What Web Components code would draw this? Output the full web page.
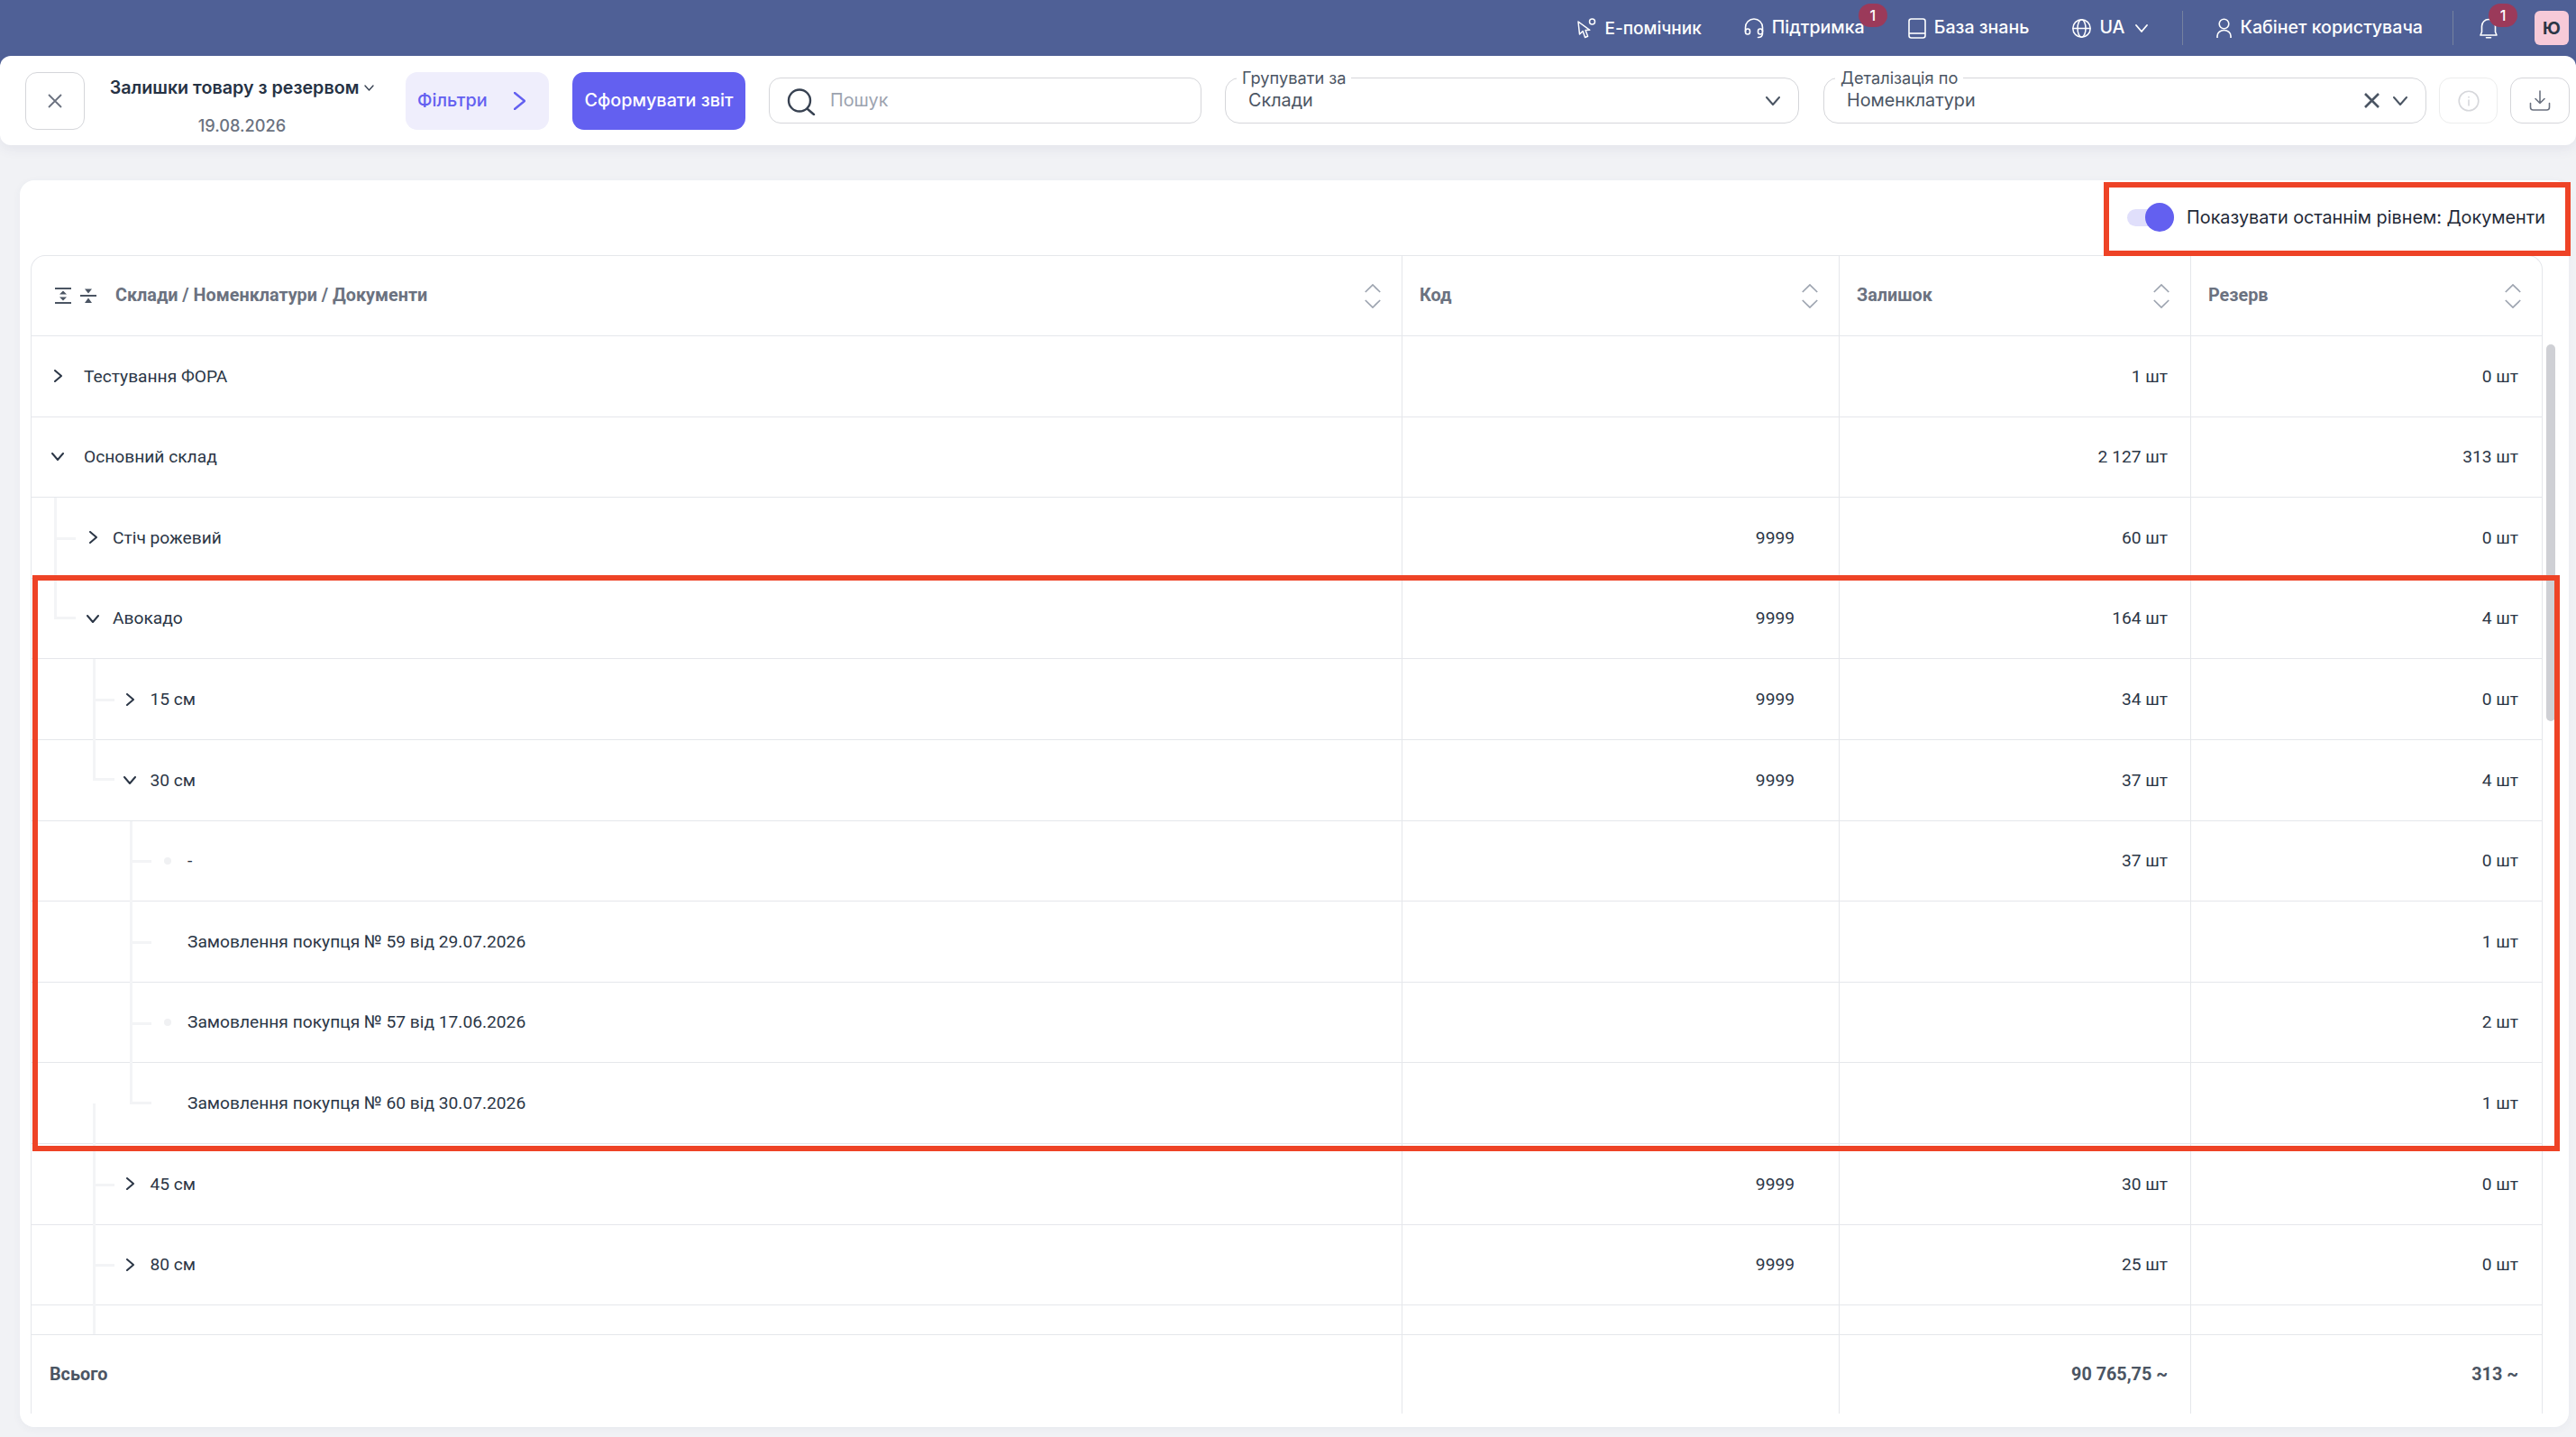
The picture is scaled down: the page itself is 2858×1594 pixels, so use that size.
<!DOCTYPE html>
<html lang="uk">
<head>
<meta charset="utf-8">
<title>Залишки товару з резервом</title>
<style>
html,body{margin:0;padding:0;height:1594px;overflow:hidden;background:#f1f2f5;font-family:Inter,"Noto Sans",sans-serif;color:#2b3646}
app-shell{display:block;position:relative;width:2858px;height:1594px;overflow:hidden}
</style>
</head>
<body>
<app-shell>
  <app-topbar>
    <top-link icon="cursor" style="margin-left:0;font-size:19px">Е-помічник</top-link>
    <top-link icon="headset" badge="1" style="margin-left:47px">Підтримка</top-link>
    <top-link icon="book" style="margin-left:48px">База знань</top-link>
    <top-link icon="globe" caret style="margin-left:48px">UA</top-link>
    <top-divider style="margin-left:38px"></top-divider>
    <top-link icon="user" style="margin-left:37px">Кабінет користувача</top-link>
    <top-divider style="margin-left:33px"></top-divider>
    <top-link icon="bell" badge="1" style="margin-left:29px"></top-link>
    <user-avatar style="margin-left:41px">Ю</user-avatar>
  </app-topbar>
  <app-toolbar>
    <square-button icon="close" style="width:66px;height:64px"></square-button>
    <report-title date="19.08.2026">Залишки товару з резервом</report-title>
    <filter-button>Фільтри</filter-button>
    <primary-button>Сформувати звіт</primary-button>
    <search-field placeholder="Пошук"></search-field>
    <float-select label="Групувати за" value="Склади" style="width:637px;margin-left:26px"></float-select>
    <float-select label="Деталізація по" value="Номенклатури" clearable style="width:669px;margin-left:27px"></float-select>
    <square-button icon="info" muted style="width:65px;height:51px;margin-left:14px"></square-button>
    <square-button icon="download" style="width:66px;height:51px;margin-left:14px"></square-button>
  </app-toolbar>
  <report-card>
    <toggle-switch slot="tools">Показувати останнім рівнем: Документи</toggle-switch>
    <report-table></report-table>
  </report-card>
  <note-box style="left:2334px;top:202px;width:518px;height:82px"></note-box>
  <note-box style="left:36px;top:638px;width:2804px;height:639px"></note-box>
</app-shell>

<script>
const ICONS = {
  cursor:`<svg width="21" height="23" viewBox="0 0 21 23" fill="none" stroke="#fff" stroke-width="1.5" stroke-linejoin="round"><path d="M1 4l1.5 14 3.6-3.4L8.6 21.5l3-1.3-2.6-6.6 4.8-.3z"/><circle cx="16.5" cy="4" r="3"/></svg>`,
  headset:`<svg width="22" height="23" viewBox="0 0 22 23" fill="none" stroke="#fff" stroke-width="1.6" stroke-linecap="round"><path d="M1.5 15V10.500a9.500 9.500 0 0 1 19 0V15"/><rect x="1.500" y="12" width="5" height="6" rx="2.400"/><rect x="15.500" y="12" width="5" height="6" rx="2.400"/><path d="M20.500 17c0 3.500-2 4.500-5 4.500"/></svg>`,
  book:`<svg width="20" height="23" viewBox="0 0 20 23" fill="none" stroke="#fff" stroke-width="1.600"><rect x="1" y="1" width="18" height="21" rx="2.500"/><path d="M1 17h18"/></svg>`,
  globe:`<svg width="21" height="21" viewBox="0 0 21 21" fill="none" stroke="#fff" stroke-width="1.500"><circle cx="10.500" cy="10.500" r="9.700"/><ellipse cx="10.500" cy="10.500" rx="4.500" ry="9.700"/><path d="M1 10.500h19"/></svg>`,
  user:`<svg width="17" height="23" viewBox="0 0 17 23" fill="none" stroke="#fff" stroke-width="1.600"><circle cx="8.500" cy="6.500" r="5.300"/><path d="M1 22v-2a7.500 6.500 0 0 1 15 0v2"/></svg>`,
  bell:`<svg width="20" height="23" viewBox="0 0 20 23" fill="none" stroke="#fff" stroke-width="1.600" stroke-linejoin="round"><path d="M10 1.500a7.500 7.500 0 0 0-7.500 7.500v6.500L1 19h18l-1.500-3.500V9A7.500 7.500 0 0 0 10 1.500z"/><path d="M7.500 21.800h5" stroke-linecap="round"/></svg>`,
  close:`<svg width="16" height="16" viewBox="0 0 16 16" fill="none" stroke="#6b7280" stroke-width="1.800"><path d="M1 1l14 14M15 1L1 15"/></svg>`,
  info:`<svg width="24" height="24" viewBox="0 0 24 24" fill="none" stroke="#d6d7db" stroke-width="1.600"><circle cx="12" cy="12" r="10.800"/><path d="M12 10.500v7M12 7v1.600"/></svg>`,
  download:`<svg width="24" height="23" viewBox="0 0 24 23" fill="none" stroke="#6b7280" stroke-width="1.600" stroke-linecap="round" stroke-linejoin="round"><path d="M12 1v13M7 9.500l5 5 5-5M1.500 14.500V19a3 3 0 0 0 3 3h15a3 3 0 0 0 3-3v-4.500"/></svg>`,
  search:`<svg width="33" height="30" viewBox="0 0 33 30" fill="none" stroke="#374151" stroke-width="2.400" stroke-linecap="round"><circle cx="15" cy="13.500" r="12"/><path d="M24 23l7 6"/></svg>`,
  expand:`<svg width="18" height="18" viewBox="0 0 18 18" fill="#4b5563"><rect x="0" y="0" width="18" height="2"/><rect x="0" y="16" width="18" height="2"/><path d="M9 3.500l4 4H5zM9 14.500l-4-4h8z"/></svg>`,
  collapse:`<svg width="18" height="18" viewBox="0 0 18 18" fill="#4b5563"><rect x="0" y="8" width="18" height="2"/><path d="M9 6.500L5 1.500h8zM9 11.500l4 5.500H5z"/></svg>`,
  sort:`<svg width="18" height="27" viewBox="0 0 18 27" fill="none" stroke="#9ca3af" stroke-width="1.700"><path d="M.8 9L9 1l8.200 8M.8 18L9 26l8.200-8"/></svg>`,
};
const chevron = (w,h,c,sw,dir='down') => dir==='down'
  ? `<svg width="${w}" height="${h}" viewBox="0 0 ${w} ${h}" fill="none" stroke="${c}" stroke-width="${sw}" stroke-linecap="round" stroke-linejoin="round"><path d="M1 1l${w/2-1} ${h-2}L${w-1} 1"/></svg>`
  : `<svg width="${w}" height="${h}" viewBox="0 0 ${w} ${h}" fill="none" stroke="${c}" stroke-width="${sw}" stroke-linecap="round" stroke-linejoin="round"><path d="M1 1l${w-2} ${h/2-1}L1 ${h-1}"/></svg>`;

class Base extends HTMLElement {
  constructor(){super();this.attachShadow({mode:'open'});}
  connectedCallback(){this.shadowRoot.innerHTML=this.render();}
}
const def=(n,f)=>customElements.define(n,class extends Base{render(){return f(this);}});

def('app-topbar',()=>`<style>:host{display:flex;align-items:center;justify-content:flex-end;height:62px;background:#4f6096;padding-right:8px;box-sizing:border-box;box-shadow:0 12px 0 #4f6096}</style><slot></slot>`);
def('top-link',e=>`<style>:host{display:flex;align-items:center;gap:9px;height:62px;position:relative;color:#fff;font:500 19.600px/1 Inter,sans-serif}
.b{position:absolute;top:4px;right:${e.textContent.trim()?'-25px':'-22px'};width:32px;height:26px;border-radius:13px;background:#9b3a5a;color:#fff;font:500 16px/26px Inter,sans-serif;text-align:center}
.c{display:flex;margin-left:3px}svg{display:block}</style>${ICONS[e.getAttribute('icon')]}<slot></slot>${e.hasAttribute('caret')?`<span class="c">${chevron(14,9,'#fff',1.8)}</span>`:''}${e.hasAttribute('badge')?`<span class="b">${e.getAttribute('badge')}</span>`:''}`);
def('top-divider',()=>`<style>:host{display:block;width:1px;height:38px;background:#75829f}</style>`);
def('user-avatar',()=>`<style>:host{display:flex;align-items:center;justify-content:center;width:38px;height:38px;border-radius:6px;background:#f7cad8;color:#2b3646;font:700 19px/1 Inter,sans-serif}</style><slot></slot>`);

def('app-toolbar',()=>`<style>:host{display:flex;align-items:center;height:99px;padding-left:28px;box-sizing:border-box;background:#fff;border-radius:12px;box-shadow:0 4px 14px rgba(60,70,110,.08);position:relative}</style><slot></slot>`);
def('square-button',e=>`<style>:host{display:flex;align-items:center;justify-content:center;box-sizing:border-box;flex:none;border:1.500px solid ${e.hasAttribute('muted')?'#eceded':'#d5d6da'};border-radius:13px;background:#fff}svg{display:block}</style>${ICONS[e.getAttribute('icon')]}`);
def('report-title',e=>`<style>:host{display:flex;flex-direction:column;align-items:center;width:297px;margin:0 33px 0 26px;flex:none;align-self:flex-start;padding-top:20px}
.t{display:flex;align-items:center;gap:6px;font:600 19.700px/30px Inter,sans-serif;color:#263244;white-space:nowrap}.d{margin-top:12px;font:500 18.200px/30px Inter,sans-serif;color:#6b7280}</style>
<div class="t"><slot></slot>${chevron(11,7,'#374151',1.400)}</div><div class="d">${e.getAttribute('date')}</div>`);
def('filter-button',()=>`<style>:host{display:flex;align-items:center;justify-content:space-between;box-sizing:border-box;flex:none;width:159px;height:64px;padding:0 26px 0 13px;background:#efeefc;border-radius:13px;color:#6360f0;font:500 19.800px/1 Inter,sans-serif}svg{display:block}</style><slot></slot>${chevron(13,20,'#6360f0',2.400,'right')}`);
def('primary-button',()=>`<style>:host{display:flex;align-items:center;justify-content:center;box-sizing:border-box;flex:none;width:192px;height:64px;margin-left:26px;background:#6360f0;border-radius:13px;color:#fff;font:500 19.800px/1 Inter,sans-serif;white-space:nowrap}</style><slot></slot>`);
def('search-field',e=>`<style>:host{display:flex;align-items:center;gap:16px;box-sizing:border-box;flex:none;width:480px;height:51px;margin-left:26px;padding-left:18px;border:1.500px solid #d5d6da;border-radius:13px;background:#fff;color:#9ca3af;font:400 19.800px/1 Inter,sans-serif}svg{display:block;margin-top:2px}span{padding-top:1px}</style>${ICONS.search}<span>${e.getAttribute('placeholder')}</span>`);
def('float-select',e=>`<style>:host{display:flex;align-items:center;box-sizing:border-box;flex:none;height:51px;position:relative;padding:0 20px 0 25px;border:1.500px solid #d5d6da;border-radius:16px;background:#fff;color:#4b5563;font:400 19.800px/1 Inter,sans-serif}
.l{position:absolute;left:12px;top:-13px;padding:0 6px;background:#fff;color:#4b5563;font:400 18.200px/24px Inter,sans-serif;white-space:nowrap}.v{flex:1;padding-top:1px}.x{display:flex;margin-right:15px}svg{display:block}</style>
<span class="l">${e.getAttribute('label')}</span><span class="v">${e.getAttribute('value')}</span>${e.hasAttribute('clearable')?`<span class="x"><svg width="17" height="17" viewBox="0 0 17 17" fill="none" stroke="#4b5563" stroke-width="2.600"><path d="M1 1l15 15M16 1L1 16"/></svg></span>`:''}${chevron(16,10,'#4b5563',2)}`);

def('report-card',()=>`<style>:host{display:block;position:relative;box-sizing:border-box;height:1383px;margin:39px 8px 0 22px;padding:0 29px 15px 12px;background:#fff;border-radius:16px;box-shadow:0 2px 10px rgba(60,70,110,.05)}
.tools{display:flex;align-items:center;justify-content:flex-end;height:83px;margin-right:-3px}
.bar{position:absolute;left:2803px;top:182px;width:10px;height:418px;border-radius:5px;background:#cfd0d5}</style>
<div class="tools"><slot name="tools"></slot></div><slot></slot><div class="bar"></div>`);
def('toggle-switch',()=>`<style>:host{display:flex;align-items:center;gap:14px;color:#1f2937;font:400 19.800px/1 Inter,sans-serif;white-space:nowrap}
.t{display:flex;justify-content:flex-end;align-items:center;width:52px;height:19px;border-radius:10px;background:#e0dffb}.k{width:32px;height:32px;border-radius:50%;background:#6360f0;flex:none}</style><span class="t"><span class="k"></span></span><slot></slot>`);
def('note-box',()=>`<style>:host{display:block;position:absolute;box-sizing:border-box;border:6px solid #ee4326;pointer-events:none}</style>`);

/* guides: [kind, x] kinds: full, ell, tee, low */
const L1=25, L2=68, L3=109;
const ROWS=[
 {lv:0,st:'r',t:'Тестування ФОРА',rest:'1 шт',res:'0 шт'},
 {lv:0,st:'d',t:'Основний склад',rest:'2 127 шт',res:'313 шт'},
 {lv:1,st:'r',t:'Стіч рожевий',code:'9999',rest:'60 шт',res:'0 шт',g:[['tee',L1]]},
 {lv:1,st:'d',t:'Авокадо',code:'9999',rest:'164 шт',res:'4 шт',g:[['ell',L1]]},
 {lv:2,st:'r',t:'15 см',code:'9999',rest:'34 шт',res:'0 шт',g:[['tee',L2]]},
 {lv:2,st:'d',t:'30 см',code:'9999',rest:'37 шт',res:'4 шт',g:[['ell',L2]]},
 {lv:3,st:'o',t:'-',rest:'37 шт',res:'0 шт',g:[['tee',L3]]},
 {lv:3,st:'',t:'Замовлення покупця № 59 від 29.07.2026',res:'1 шт',g:[['tee',L3]]},
 {lv:3,st:'o',t:'Замовлення покупця № 57 від 17.06.2026',res:'2 шт',g:[['tee',L3]]},
 {lv:3,st:'',t:'Замовлення покупця № 60 від 30.07.2026',res:'1 шт',g:[['ell',L3],['low',L2]]},
 {lv:2,st:'r',t:'45 см',code:'9999',rest:'30 шт',res:'0 шт',g:[['tee',L2]]},
 {lv:2,st:'r',t:'80 см',code:'9999',rest:'25 шт',res:'0 шт',g:[['tee',L2]]},
 {lv:2,st:'none',t:'',g:[['full',L2]]},
];
const PAD=[19,58,99,141], GAP=[19,12,12.500,12];
const COLS='grid-template-columns:1520px 485px 390px 390px';
def('table-head',e=>`<style>:host{display:block;flex:none}.r{display:grid;${COLS};height:89px;box-sizing:border-box;border-bottom:1px solid #e5e7eb}
.c{display:flex;align-items:center;justify-content:space-between;padding:0 23px 0 19px;border-left:1px solid #e5e7eb;color:#6b7280;font:700 19.800px/1 Roboto,sans-serif}.c:first-child{border-left:0;padding-left:26px}
.i{display:flex;align-items:center;gap:10px}.i b{font:inherit;margin-left:11px}svg{display:block}</style>
<div class="r"><div class="c"><span class="i">${ICONS.expand}${ICONS.collapse}<b>Склади / Номенклатури / Документи</b></span>${ICONS.sort}</div><div class="c"><span>Код</span>${ICONS.sort}</div><div class="c"><span>Залишок</span>${ICONS.sort}</div><div class="c"><span>Резерв</span>${ICONS.sort}</div></div>`);
def('tree-row',e=>{
  const d=e.data;const g=(d.g||[]).map(([k,x])=>`<i class="g ${k}" style="left:${x}px"></i>`).join('');
  const ic=d.st==='r'?chevron(9,14,'#2b3646',2,'right'):d.st==='d'?chevron(14,9,'#2b3646',2):d.st==='o'?'<span class="dot"></span>':'';
  return `<style>:host{display:block;flex:none}.r{display:grid;${COLS};height:89.600px;box-sizing:border-box;border-bottom:1px solid #e5e7eb;color:#2b3646;font:400 19.200px/1 Roboto,sans-serif}
.c{display:flex;align-items:center;justify-content:flex-end;padding-right:26px;border-left:1px solid #e5e7eb;white-space:nowrap}.c.k{padding-right:49px}.c.q{padding-right:25px}
.c.f{justify-content:flex-start;border-left:0;padding:0;position:relative;padding-left:${PAD[d.lv]}px}
.m{display:flex;align-items:center;justify-content:center;width:20px;height:20px;margin-right:${GAP[d.lv]}px;flex:none}svg{display:block}
.dot{width:8px;height:8px;border-radius:50%;background:#f0f1f3}
.g{position:absolute;top:0;width:3px;background:#f3f4f6}.g.full,.g.tee{bottom:-1px}.g.ell{height:calc(50% + 1px)}.g.low{top:50%;bottom:-1px}
.g.tee::after,.g.ell::after{content:"";position:absolute;left:0;width:24px;height:3px;background:#f3f4f6}.g.tee::after{top:calc(50% - 1px)}.g.ell::after{bottom:0}</style>
<div class="r"><div class="c f">${g}${d.st==='none'?'':`<span class="m">${ic}</span>`}<span>${d.t}</span></div><div class="c k">${d.code||''}</div><div class="c q">${d.rest||''}</div><div class="c">${d.res||''}</div></div>`;
});
def('table-foot',e=>`<style>:host{display:block;flex:none}.r{display:grid;${COLS};height:88px;border-top:1px solid #e5e7eb;box-sizing:border-box;color:#4b5563;font:700 19.800px/1 Roboto,sans-serif;margin-top:-1px;background:#fff;position:relative}
.c{display:flex;align-items:center;justify-content:flex-end;padding-right:26px;border-left:1px solid #e5e7eb;white-space:nowrap}.c:nth-child(3){padding-right:25px}.c:first-child{border-left:0;justify-content:flex-start;padding-left:20px}</style>
<div class="r"><div class="c">Всього</div><div class="c"></div><div class="c">90 765,75 ~</div><div class="c">313 ~</div></div>`);
customElements.define('report-table',class extends HTMLElement{
  constructor(){super();this.attachShadow({mode:'open'});}
  connectedCallback(){
    this.shadowRoot.innerHTML=`<style>:host{display:block;box-sizing:border-box;height:1285px;border:1px solid #e5e7eb;border-bottom:0;border-radius:16px 16px 0 0}
.body{height:1108px;overflow:hidden;display:flex;flex-direction:column}</style><table-head></table-head><div class="body"></div><table-foot></table-foot>`;
    const b=this.shadowRoot.querySelector('.body');
    ROWS.forEach(d=>{const r=document.createElement('tree-row');r.data=d;b.appendChild(r);});
  }
});
customElements.define('app-shell',class extends HTMLElement{
  constructor(){super();this.attachShadow({mode:'open'}).innerHTML=`<style>:host{display:block}</style><slot></slot>`;}
});
</script>
</body>
</html>
